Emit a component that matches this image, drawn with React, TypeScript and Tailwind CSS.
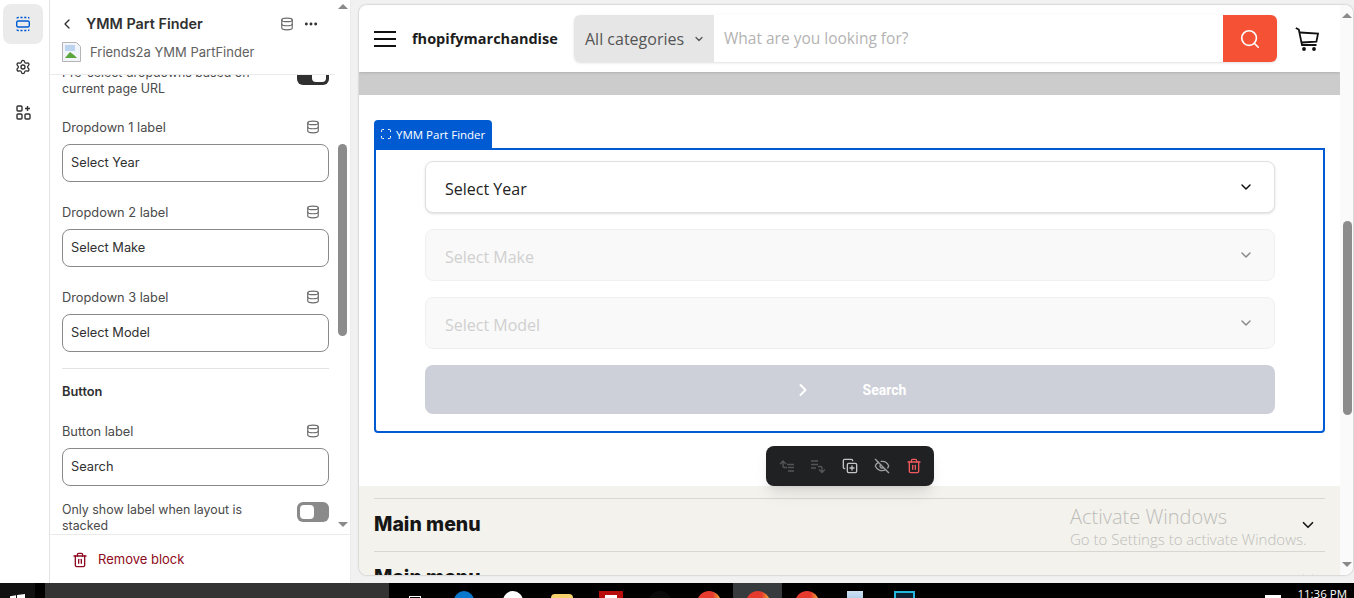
import { ChevronLeft, ChevronDown, ChevronRight, Ellipsis, Database, Settings, Trash2, Search, CopyPlus, EyeOff } from "lucide-react";

function Toggle({ dark }: { dark?: boolean }) {
  return (
    <div className={`flex h-5 w-8 shrink-0 items-center rounded-md px-[3px] ${dark ? "justify-end bg-[#303030]" : "bg-[#8a8a8a]"}`}>
      <div className="h-3.5 w-3.5 rounded-[4px] bg-white" />
    </div>
  );
}

function LabelField({ label, value }: { label: string; value: string }) {
  return (
    <div>
      <div className="flex h-5 items-center justify-between pr-[9px] text-[12.8px] text-[#4a4a4a]">
        <span className="pt-[2px]">{label}</span>
        <Database size={14} className="text-[#6b6b6b]" />
      </div>
      <div className="mt-[7px] flex h-[38px] items-center rounded-lg border border-[#8a8a8a] bg-white px-2 text-[12.8px] text-[#303030]">
        {value}
      </div>
    </div>
  );
}

function SelectBox({ label, disabled }: { label: string; disabled?: boolean }) {
  return (
    <div className={`flex h-[52px] items-center justify-between rounded-lg border pr-5 pl-[19px] text-base ${disabled ? "border-[#f0f0f0] bg-[#f9f9f9] text-[#d0d0d0]" : "border-[#e0e0e0] bg-white text-[#222222] shadow-sm"}`}>
      <span className="pt-1">{label}</span>
      <ChevronDown size={16} strokeWidth={2.2} className={disabled ? "text-[#8a8a8a]" : "text-[#111111]"} />
    </div>
  );
}

function ArrowUp({ className }: { className: string }) {
  return <div className={`absolute h-0 w-0 border-x-[5px] border-b-[5px] border-x-transparent border-b-[#8a8a8a] ${className}`} />;
}

function ArrowDown({ className }: { className: string }) {
  return <div className={`absolute h-0 w-0 border-x-[5px] border-t-[5px] border-x-transparent border-t-[#8a8a8a] ${className}`} />;
}

function MenuRow() {
  return (
    <div className="flex h-[53px] shrink-0 items-center justify-between border-t border-[#d8d7d2] pr-[8px]">
      <span className="font-['Inter',sans-serif] text-[19.5px] font-extrabold text-[#161616]">Main menu</span>
      <ChevronDown size={18} strokeWidth={2.2} className="text-[#161616]" />
    </div>
  );
}

function TaskCell({ active, children }: { active?: boolean; children?: React.ReactNode }) {
  return <div className={`flex h-[15px] w-[48.9px] shrink-0 justify-center overflow-hidden pt-2 ${active ? "bg-[#383b3e]" : ""}`}>{children}</div>;
}

function ChromeDot() {
  return <div className="h-6 w-6 shrink-0 rounded-full bg-[linear-gradient(90deg,#e53a2e_65%,#f2b632)]" />;
}

export default function App() {
  return (
    <div className="relative flex h-[598px] w-[1354px] flex-col overflow-hidden bg-[#f1f1f1] font-['Inter',sans-serif]">
      <div className="flex min-h-0 flex-1">
        <nav className="flex w-[50px] shrink-0 flex-col border-r border-[#e3e3e3] bg-white pt-1 pl-[3px]">
          <div className="flex h-10 w-10 items-center justify-center rounded-lg bg-[#ebebeb]">
            <svg width="16" height="16" viewBox="0 0 16 16" fill="none" stroke="#005bd3" strokeWidth="1.4">
              <rect x="1.7" y="5" width="12.6" height="6" rx="1.5" />
              <path d="M2 2.5c0-.6.4-1 1-1h10c.6 0 1 .4 1 1M2 13.5c0 .6.4 1 1 1h10c.6 0 1-.4 1-1" strokeDasharray="2.2 1.6" />
            </svg>
          </div>
          <div className="mt-[3px] flex h-10 w-10 items-center justify-center">
            <Settings size={16} strokeWidth={2} className="text-[#303030]" />
          </div>
          <div className="mt-[5px] flex h-10 w-10 items-center justify-center">
            <svg width="15" height="15" viewBox="0 0 15 15" fill="none" stroke="#303030" strokeWidth="1.4">
              <rect x="1" y="1" width="5" height="5" rx="1" />
              <rect x="1" y="9" width="5" height="5" rx="1" />
              <rect x="9" y="9" width="5" height="5" rx="1" />
              <path d="M11.5 1v5M9 3.5h5" />
            </svg>
          </div>
        </nav>

        <aside className="relative flex w-[301px] shrink-0 flex-col border-r border-[#ebebeb] bg-white">
          <header className="relative z-10 mr-[15px] flex h-[75px] shrink-0 flex-col border-b border-[#ebebeb] bg-white pl-3 pr-4">
            <div className="flex h-[42px] items-center pt-[6px]">
              <ChevronLeft size={16} strokeWidth={2} className="-ml-[3px] text-[#303030]" />
              <h1 className="ml-[11px] flex-1 text-[14.4px] font-semibold text-[#303030]">YMM Part Finder</h1>
              <Database size={14} className="mr-[9px] text-[#6b6b6b]" />
              <Ellipsis size={16} strokeWidth={2.4} className="text-[#303030]" />
            </div>
            <div className="flex h-5 items-center gap-[9px] text-[13px] text-[#616161]">
              <svg width="19" height="20" viewBox="0 0 19 20">
                <path d="M.5.5h14l4 4v15H.5z" fill="#f1f5fb" stroke="#b5b5b5" />
                <path d="M3 3h10v6H3z" fill="#bcd3f0" />
                <path d="M3 16l5-6 4 3 3 3H3z" fill="#5aa63c" />
              </svg>
              <span className="pt-[2px]">Friends2a YMM PartFinder</span>
            </div>
          </header>

          <div className="-mt-[10px] min-h-0 flex-1 overflow-hidden pr-[21px] pl-3">
            <div className="flex items-start justify-between text-[12.4px] leading-4 text-[#4a4a4a]">
              <span className="w-[200px]">Pre-select dropdowns based on current page URL</span>
              <Toggle dark />
            </div>
            <div className="mt-5 flex flex-col gap-5">
              <LabelField label="Dropdown 1 label" value="Select Year" />
              <LabelField label="Dropdown 2 label" value="Select Make" />
              <LabelField label="Dropdown 3 label" value="Select Model" />
            </div>
            <div className="mt-4 border-t border-[#e3e3e3] pt-[13px] text-[12.8px] leading-5 font-semibold text-[#303030]">Button</div>
            <div className="mt-[19px]">
              <LabelField label="Button label" value="Search" />
            </div>
            <div className="mt-4 flex items-start justify-between text-[12.4px] leading-4 text-[#4a4a4a]">
              <span className="w-[200px]">Only show label when layout is stacked</span>
              <Toggle />
            </div>
          </div>

          <footer className="z-10 flex h-[49px] shrink-0 items-center gap-[10px] border-t border-[#ebebeb] bg-white pt-[2px] pl-[22px] text-[13px] text-[#8e0b21]">
            <Trash2 size={16} />
            Remove block
          </footer>

          <ArrowUp className="top-[4px] left-[288px]" />
          <div className="absolute top-[144px] left-[288px] h-[192px] w-[9px] rounded-full bg-[#8c8c8c]" />
          <ArrowDown className="top-[522px] left-[288px]" />
        </aside>

        <main className="mt-[5px] mr-px mb-2 ml-2 flex min-w-0 flex-1 overflow-hidden rounded-lg bg-white shadow-[0_0_2px_rgba(0,0,0,0.35)]">
          <div className="relative flex min-w-0 flex-1 flex-col overflow-hidden">
            <div className="relative z-10 flex h-[67px] shrink-0 items-center bg-white pr-[21px] pl-[15px] shadow-sm">
              <svg width="22" height="18" viewBox="0 0 22 18" fill="none" stroke="#111111" strokeWidth="2">
                <path d="M0 2h22M0 9h22M0 16h22" />
              </svg>
              <span className="ml-4 w-[146px] font-['Open_Sans',sans-serif] text-[14.5px] font-bold whitespace-nowrap text-[#1c1c1c]">fhopifymarchandise</span>
              <div className="ml-4 flex h-[47px] flex-1 overflow-hidden rounded-md shadow">
                <div className="flex w-[140px] items-center gap-[9px] bg-[#e6e6e6] pl-[11px] font-['Open_Sans',sans-serif] text-base text-[#555555]">
                  All categories
                  <ChevronDown size={12} strokeWidth={2.5} />
                </div>
                <div className="flex flex-1 items-center bg-white pl-[10px] font-['Open_Sans',sans-serif] text-[15.5px] text-[#b3b3b3]">What are you looking for?</div>
                <div className="flex w-[54px] items-center justify-center bg-[#f45135]">
                  <Search size={22} strokeWidth={1.8} className="text-white" />
                </div>
              </div>
              <svg className="ml-[18px]" width="24" height="24" viewBox="0 0 24 24" fill="none" stroke="#111111" strokeWidth="1.8">
                <path d="M.8 1l3 1.5L7 18h14.5" />
                <path d="M5 5.5l18 1.2-1.6 8L6.3 15.5" />
                <circle cx="9" cy="22" r="1" fill="#111111" />
                <circle cx="19" cy="22" r="1" fill="#111111" />
              </svg>
            </div>
            <div className="h-[23px] shrink-0 bg-[#cccccc]" />
            <section className="h-[391px] shrink-0 px-[15px] pt-[25px]">
              <div className="flex h-[28px] w-[118px] items-center gap-[5px] rounded-t bg-[#005bd3] pl-[7px] font-['Open_Sans',sans-serif] text-[11.5px] text-white">
                <svg width="10" height="10" viewBox="0 0 10 10" fill="none" stroke="white" strokeWidth="1">
                  <path d="M.5 3V1.5a1 1 0 0 1 1-1H3M7 .5h1.5a1 1 0 0 1 1 1V3M9.5 7v1.5a1 1 0 0 1-1 1H7M3 9.5H1.5a1 1 0 0 1-1-1V7" />
                </svg>
                <span className="pt-[2px]">YMM Part Finder</span>
              </div>
              <div className="flex h-[285px] flex-col gap-4 rounded-b border-2 border-[#005bd3] pt-[11px] pr-[48px] pl-[49px] font-['Open_Sans',sans-serif]">
                <SelectBox label="Select Year" />
                <SelectBox label="Select Make" disabled />
                <SelectBox label="Select Model" disabled />
                <div className="relative flex h-[49px] items-center justify-center rounded-lg bg-[#cdd0d8] font-['Roboto',sans-serif] text-sm font-bold text-white">
                  <ChevronRight size={20} strokeWidth={2.4} className="absolute left-[368px]" />
                  <span className="ml-[69px]">Search</span>
                </div>
              </div>

              <div className="relative z-10 mt-[13px] flex justify-center">
                <div className="flex h-10 w-[168px] items-center gap-[15.75px] rounded-lg bg-[#202123] pl-[13px] shadow-lg">
                  <svg width="16" height="16" viewBox="0 0 16 16" fill="none" stroke="#555555" strokeWidth="1.4">
                    <path d="M1 6l3-3 3 3M4 3.5V8c0 1 .6 1.5 1.5 1.5H8M8 6.5h7M9 9.5h6M9 13h6" />
                  </svg>
                  <svg width="16" height="16" viewBox="0 0 16 16" fill="none" stroke="#555555" strokeWidth="1.4">
                    <path d="M1 3h7M1 6.5h7M1 10h5M8 8.5h2.5c1 0 1.5.6 1.5 1.5v4M9 11.5l3 3 3-3" />
                  </svg>
                  <CopyPlus size={16} className="text-[#c4c4c4]" />
                  <EyeOff size={16} className="text-[#a0a0a0]" />
                  <Trash2 size={16} className="text-[#ef5a5f]" />
                </div>
              </div>
            </section>
            <section className="flex min-h-0 flex-1 flex-col overflow-hidden bg-[#f3f2ed] px-[15px] pt-3">
              <MenuRow />
              <MenuRow />
            </section>
            <div className="absolute top-[499px] left-[711px] z-20 font-['Open_Sans',sans-serif] font-light text-[#bdbdb9]">
              <div className="text-[20px] leading-[25px]">Activate Windows</div>
              <div className="text-[15px] leading-5 whitespace-nowrap">Go to Settings to activate Windows.</div>
            </div>
          </div>
          <div className="relative w-[13px] shrink-0 bg-[#fafafa]">
            <ArrowUp className="top-2 left-[2px]" />
            <div className="absolute top-[216px] left-[3px] h-[194px] w-[9px] rounded-full bg-[#8c8c8c]" />
            <ArrowDown className="top-[557px] left-[2px]" />
          </div>
        </main>
      </div>

      <div className="flex h-[15px] shrink-0 overflow-hidden bg-black text-white">
        <div className="flex h-[15px] w-[35px] shrink-0 justify-center bg-[#111111] pt-[11px]">
          <svg width="15" height="15" viewBox="0 0 15 15" className="shrink-0" fill="white">
            <path d="M0 2.2l6-.9v5.7H0zM7 1.1L15 0v7H7z" />
          </svg>
        </div>
        <div className="ml-[10px] h-[15px] w-[344px] shrink-0 bg-[#333333]" />
        <div className="ml-[2px] flex">
          <TaskCell><div className="mt-[5px] h-3 w-3 shrink-0 border border-white" /></TaskCell>
          <TaskCell><div className="h-[20px] w-[20px] shrink-0 rounded-full bg-[#0b78d0]" /></TaskCell>
          <TaskCell><div className="h-5 w-5 shrink-0 rounded-t-full bg-white" /></TaskCell>
          <TaskCell><div className="mt-[3px] h-5 w-[22px] shrink-0 rounded-t-sm bg-[#f4d16b]" /></TaskCell>
          <TaskCell>
            <div className="flex h-6 w-6 shrink-0 justify-center bg-[#b90d0d] pt-1">
              <div className="h-4 w-3 bg-white" />
            </div>
          </TaskCell>
          <TaskCell><div className="h-6 w-6 shrink-0 rounded-full bg-[#0a0a0a]" /></TaskCell>
          <TaskCell><ChromeDot /></TaskCell>
          <TaskCell active><ChromeDot /></TaskCell>
          <TaskCell><ChromeDot /></TaskCell>
          <TaskCell><div className="h-5 w-4 shrink-0 bg-[linear-gradient(180deg,#cfe1f2,#7fb2dc)]" /></TaskCell>
          <TaskCell><div className="h-6 w-[21px] shrink-0 border-2 border-[#22b8dd] bg-[#0c2233]" /></TaskCell>
        </div>
        <div className="flex flex-1 items-start justify-end">
          <div className="mt-3 mr-4 h-3 w-4 bg-white" />
          <div className="mt-[2px] mr-[7px] shrink-0 font-['Open_Sans',sans-serif] text-[11.5px] leading-[17px] whitespace-nowrap text-white">11:36 PM</div>
        </div>
      </div>
    </div>
  );
}
